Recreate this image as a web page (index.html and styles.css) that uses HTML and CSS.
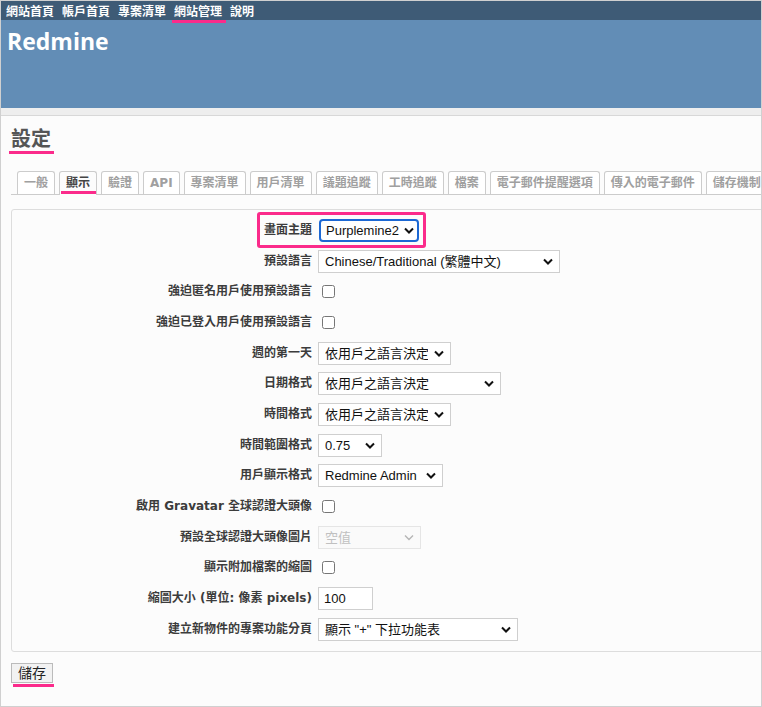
FILE: index.html
```html
<!DOCTYPE html>
<html>
<head>
    <title>設定 - Redmine</title>
    <link rel="stylesheet" href="styles.css">
</head>
<body>
    <div class="frame">
        <div class="top-menu">
            <a>網站首頁</a>
            <a>帳戶首頁</a>
            <a>專案清單</a>
            <a class="marked">網站管理</a>
            <a>說明</a>
        </div>
        <div class="header">
            <h1>Redmine</h1>
        </div>
        <div class="main">
            <div class="content">
                <h2><span class="marked">設定</span></h2>

                <ul class="tabs">
                    <li><a>一般</a></li>
                    <li><a class="selected marked">顯示</a></li>
                    <li><a>驗證</a></li>
                    <li><a>API</a></li>
                    <li><a>專案清單</a></li>
                    <li><a>用戶清單</a></li>
                    <li><a>議題追蹤</a></li>
                    <li><a>工時追蹤</a></li>
                    <li><a>檔案</a></li>
                    <li><a>電子郵件提醒選項</a></li>
                    <li><a>傳入的電子郵件</a></li>
                    <li><a>儲存機制</a></li>
                </ul>

                <form>
                    <div class="box">
                        <div class="row">
                            <span class="mark-box"></span>
                            <label>畫面主題</label>
                            <span class="select w-theme focused">
                                <select><option>Purplemine2</option></select>
                                <svg class="chev" width="10" height="7" viewBox="0 0 10 7"><polyline points="1,1.5 5,5.5 9,1.5"/></svg>
                            </span>
                        </div>
                        <div class="row">
                            <label>預設語言</label>
                            <span class="select w-lang">
                                <select><option>Chinese/Traditional (繁體中文)</option></select>
                                <svg class="chev" width="10" height="7" viewBox="0 0 10 7"><polyline points="1,1.5 5,5.5 9,1.5"/></svg>
                            </span>
                        </div>
                        <div class="row">
                            <label>強迫匿名用戶使用預設語言</label>
                            <span><input type="checkbox"></span>
                        </div>
                        <div class="row">
                            <label>強迫已登入用戶使用預設語言</label>
                            <span><input type="checkbox"></span>
                        </div>
                        <div class="row">
                            <label>週的第一天</label>
                            <span class="select w-auto">
                                <select><option>依用戶之語言決定</option></select>
                                <svg class="chev" width="10" height="7" viewBox="0 0 10 7"><polyline points="1,1.5 5,5.5 9,1.5"/></svg>
                            </span>
                        </div>
                        <div class="row">
                            <label>日期格式</label>
                            <span class="select w-date">
                                <select><option>依用戶之語言決定</option></select>
                                <svg class="chev" width="10" height="7" viewBox="0 0 10 7"><polyline points="1,1.5 5,5.5 9,1.5"/></svg>
                            </span>
                        </div>
                        <div class="row">
                            <label>時間格式</label>
                            <span class="select w-auto">
                                <select><option>依用戶之語言決定</option></select>
                                <svg class="chev" width="10" height="7" viewBox="0 0 10 7"><polyline points="1,1.5 5,5.5 9,1.5"/></svg>
                            </span>
                        </div>
                        <div class="row">
                            <label>時間範圍格式</label>
                            <span class="select w-span">
                                <select><option>0.75</option></select>
                                <svg class="chev" width="10" height="7" viewBox="0 0 10 7"><polyline points="1,1.5 5,5.5 9,1.5"/></svg>
                            </span>
                        </div>
                        <div class="row">
                            <label>用戶顯示格式</label>
                            <span class="select w-user">
                                <select><option>Redmine Admin</option></select>
                                <svg class="chev" width="10" height="7" viewBox="0 0 10 7"><polyline points="1,1.5 5,5.5 9,1.5"/></svg>
                            </span>
                        </div>
                        <div class="row">
                            <label>啟用 Gravatar 全球認證大頭像</label>
                            <span><input type="checkbox"></span>
                        </div>
                        <div class="row">
                            <label>預設全球認證大頭像圖片</label>
                            <span class="select w-avatar disabled">
                                <select disabled><option>空值</option></select>
                                <svg class="chev" width="10" height="7" viewBox="0 0 10 7"><polyline points="1,1.5 5,5.5 9,1.5"/></svg>
                            </span>
                        </div>
                        <div class="row">
                            <label>顯示附加檔案的縮圖</label>
                            <span><input type="checkbox"></span>
                        </div>
                        <div class="row">
                            <label>縮圖大小 (單位: 像素 pixels)</label>
                            <span><input type="text" class="text-field" value="100"></span>
                        </div>
                        <div class="row">
                            <label>建立新物件的專案功能分頁</label>
                            <span class="select w-new">
                                <select><option>顯示 "+" 下拉功能表</option></select>
                                <svg class="chev" width="10" height="7" viewBox="0 0 10 7"><polyline points="1,1.5 5,5.5 9,1.5"/></svg>
                            </span>
                        </div>
                    </div>

                    <button type="button" class="btn marked">儲存</button>
                </form>
            </div>
        </div>
    </div>
</body>
</html>
```

FILE: styles.css
```css
body {
    margin: 0;
    font-family: "DejaVu Sans", "Noto Sans CJK TC", sans-serif;
    background-color: #fcfcfc;
}
.frame {
    width: 762px;
    height: 707px;
    box-sizing: border-box;
    border: 1px solid #d0d0d0;
    overflow: hidden;
    background-color: #fcfcfc;
}
.top-menu {
    background-color: #3e5b76;
    height: 19px;
    line-height: 19px;
    padding-left: 5px;
    display: flex;
    gap: 8px;
}
.top-menu a {
    position: relative;
    color: white;
    font-family: "Noto Sans CJK TC", sans-serif;
    font-weight: bold;
    font-size: 12px;
}
.top-menu a.marked::after {
    content: "";
    position: absolute;
    left: -2px;
    right: -4px;
    top: 19px;
    height: 3px;
    background-color: #fb2b8b;
}
.header {
    background-color: #628db6;
    height: 88px;
}
.header h1 {
    margin: 0;
    padding: 5px 0 0 6px;
    color: white;
    font-family: "Open Sans", sans-serif;
    font-size: 23px;
    line-height: 32px;
}
.main {
    background-color: #eeeeee;
    padding-top: 7px;
}
.content {
    background-color: #fcfcfc;
    border-top: 1px solid #d8d8d8;
    padding: 6px 0 40px 10px;
    height: 600px;
}
h2 {
    margin: 0;
    font-family: "Noto Sans CJK TC", sans-serif;
    font-size: 20px;
    color: #555;
    line-height: 32px;
}
h2 .marked {
    position: relative;
    display: inline-block;
}
h2 .marked::after {
    content: "";
    position: absolute;
    left: -2px;
    right: -3px;
    top: 29px;
    height: 3px;
    background-color: #fb2b8b;
}
.tabs {
    list-style: none;
    margin: 17px 0 0 0;
    padding: 0 0 0 6px;
    display: flex;
    gap: 4px;
    white-space: nowrap;
    border-bottom: 1px solid #cccccc;
    width: 800px;
}
.tabs a {
    display: block;
    position: relative;
    padding: 2px 6px;
    line-height: 18px;
    font-family: "DejaVu Sans", "Noto Sans CJK TC", sans-serif;
    font-size: 12px;
    font-weight: bold;
    color: #a0a0a0;
    background-color: #fff;
    border: 1px solid #cccccc;
    border-bottom: none;
    border-radius: 3px 3px 0 0;
}
.tabs a.selected {
    color: #444;
    background-color: #fcfcfc;
    margin-bottom: -1px;
    padding-bottom: 3px;
}
.tabs a.marked::after {
    content: "";
    position: absolute;
    left: 1px;
    right: 0;
    bottom: 1px;
    height: 3px;
    background-color: #fb2b8b;
}
.box {
    margin-top: 14px;
    width: 800px;
    border: 1px solid #dddddd;
    border-radius: 3px;
    background-color: #fcfcfc;
    padding: 5px 0 6px 0;
}
.row {
    position: relative;
    display: grid;
    grid-template-columns: 300px 1fr;
    column-gap: 6px;
    align-items: center;
    height: 30.7px;
}
.row label {
    text-align: right;
    font-size: 12px;
    font-weight: bold;
    color: #3c3c3c;
    padding-bottom: 4px;
}
.mark-box {
    position: absolute;
    left: 245px;
    top: -3px;
    width: 169px;
    height: 36px;
    box-sizing: border-box;
    border: 3px solid #fb2b8b;
    border-radius: 3px;
}
.select {
    position: relative;
    display: inline-block;
    height: 23px;
}
.select select {
    appearance: none;
    -webkit-appearance: none;
    width: 100%;
    height: 23px;
    margin: 0;
    padding: 0 22px 0 6px;
    border: 1px solid #cfcfcf;
    border-radius: 0;
    background-color: white;
    color: #111;
    font-family: "Liberation Sans", "Noto Sans CJK TC", sans-serif;
    font-size: 13px;
}
.select .chev {
    position: absolute;
    right: 7px;
    top: 8px;
    fill: none;
    stroke: #111;
    stroke-width: 2;
}
.select.focused select {
    border: 2px solid #1c68d4;
    border-radius: 4px;
    padding: 0 12px 0 5px;
}
.select.focused .chev {
    right: 5px;
}
.select.disabled select {
    color: #a8a8a8;
    border-color: #dcdcdc;
    background-color: #fafafa;
}
.select.disabled .chev {
    stroke: #b5b5b5;
    stroke-width: 1.4;
}
.w-theme { width: 100px; margin-left: 1px; }
.w-lang { width: 242px; }
.w-auto { width: 133px; }
.w-date { width: 183px; }
.w-span { width: 64px; }
.w-user { width: 125px; }
.w-avatar { width: 103px; }
.w-new { width: 200px; }
input[type="checkbox"] {
    width: 13px;
    height: 13px;
    margin: 0 0 0 4px;
    display: block;
}
.text-field {
    width: 55px;
    height: 23px;
    box-sizing: border-box;
    border: 1px solid #cfcfcf;
    padding: 0 5px;
    font-family: "Liberation Sans", sans-serif;
    font-size: 13px;
    color: #111;
    display: block;
}
.btn {
    position: relative;
    margin-top: 11px;
    padding: 0 6px;
    height: 20px;
    font-family: "Noto Sans CJK TC", sans-serif;
    font-size: 14px;
    line-height: 17px;
    color: #222;
    background-color: #f2f2f2;
    border: 1px solid #bbbbbb;
    border-radius: 0;
}
.btn.marked::after {
    content: "";
    position: absolute;
    left: 1px;
    right: -2px;
    top: 20px;
    height: 3px;
    background-color: #fb2b8b;
}
```
